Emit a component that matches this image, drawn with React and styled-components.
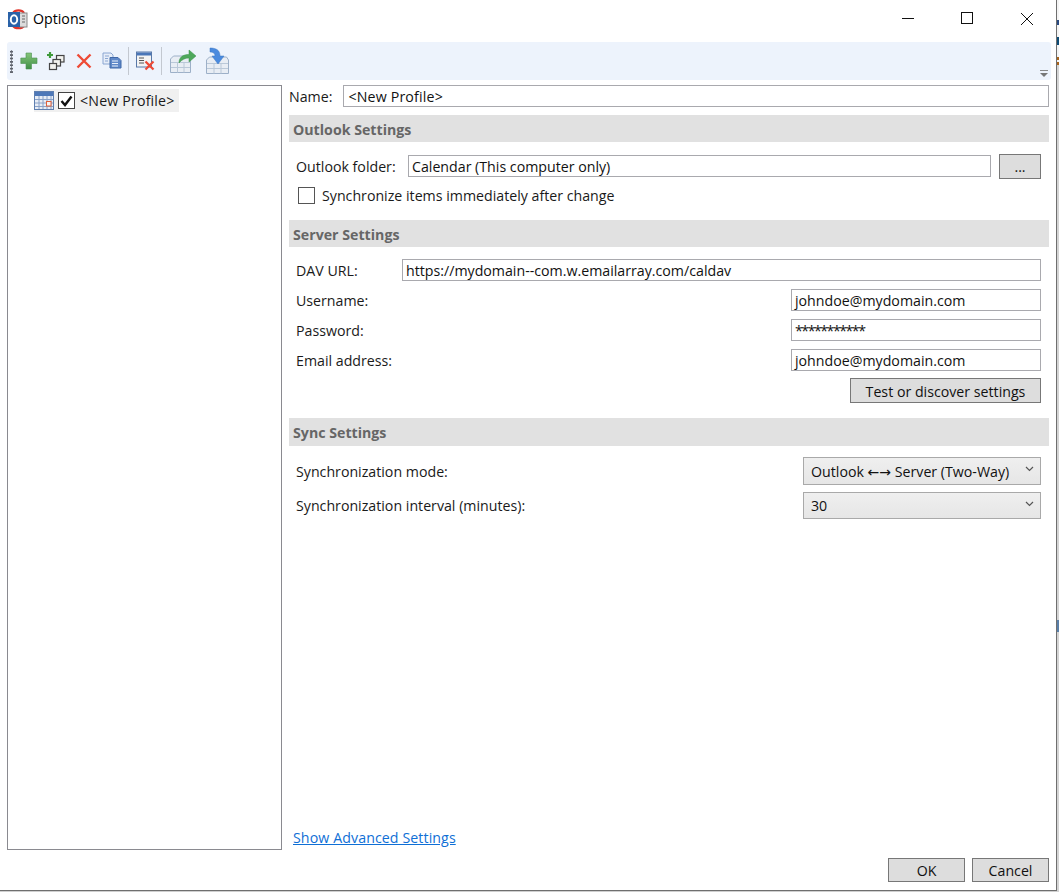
import React from 'react'
import styled, { createGlobalStyle } from 'styled-components'

const GlobalStyle = createGlobalStyle`
html, body {
  margin: 0;
  padding: 0;
  background: #ffffff;
}
body {
  font-family: "Open Sans", "Noto Sans", "Liberation Sans", sans-serif;
  font-size: 14.2px;
  color: #1a1a1a;
}
`

const Screen = styled.div`
width: 1059px;
height: 892px;
overflow: hidden;
display: flex;
background: #cfcfcf;
`

const Win = styled.div`
width: 1057px;
height: 891px;
flex: none;
box-sizing: border-box;
background: #ffffff;
border-right: 1px solid #6f6f6f;
border-bottom: 1px solid #6f6f6f;
display: flex;
flex-direction: column;
`

// what peeks out from the window behind the dialog
const BehindStrip = styled.div`
flex: 1;
background: linear-gradient(
  #f4f4f4 0 20px, #2a4a80 20px 25px, #f4f4f4 25px 37px, #0f4c75 37px 45px,
  #f4f4f4 45px 57px, #a8641c 57px 60px, #f4f4f4 60px 62px, #a8641c 62px 65px,
  #d4d4d4 65px 620px, #5a7fa8 620px 632px, #d4d4d4 632px
);
`

const TitleBar = styled.div`
height: 42px;
flex: none;
display: flex;
align-items: center;
padding: 0 0 5px 7px;
box-sizing: border-box;
`

const Title = styled.div`
margin-left: 4px;
font-size: 14.2px;
color: #000;
flex: 1;
`

const WinButton = styled.div`
width: 59px;
height: 37px;
display: flex;
align-items: center;
justify-content: center;
`

const Toolbar = styled.div`
height: 38px;
flex: none;
margin: 0 5px 0 7px;
background: #edf3fc;
border-radius: 3px;
display: flex;
align-items: center;
position: relative;
padding-left: 3px;
`

const Grip = styled.div`
width: 3px;
height: 23px;
margin-right: 2px;
background-image: radial-gradient(circle, #5f636c 1.2px, transparent 1.4px);
background-size: 3px 3.400px;
`

const ToolIcon = styled.div`
width: ${({ w }) => w || 28}px;
height: 28px;
display: flex;
align-items: center;
justify-content: center;
`

const ToolSep = styled.div`
width: 1px;
height: 28px;
margin: 0 3px 0 2px;
background: #c3c8d0;
`

const Overflow = styled.div`
position: absolute;
right: 2px;
bottom: 3px;
display: flex;
flex-direction: column;
align-items: center;
gap: 1px;
`

const Body = styled.div`
flex: 1;
display: flex;
padding: 5px 7px 0 7px;
min-height: 0;
`

const Tree = styled.div`
width: 275px;
height: 765px;
flex: none;
box-sizing: border-box;
border: 1px solid #8a8a90;
padding: 3px 0 0 26px;
`

const TreeNode = styled.div`
display: inline-flex;
align-items: center;
height: 23px;
background: #f0f0f0;
padding-right: 4px;
`

const TreeCheck = styled.div`
width: 17px;
height: 17px;
box-sizing: border-box;
margin: 0 5px 0 4px;
border: 1px solid #444;
background: #fff;
display: flex;
align-items: center;
justify-content: center;
`

const ProfileName = styled.span`
letter-spacing: 0.170px;
`

const Main = styled.div`
flex: 1;
margin-left: 7px;
display: flex;
flex-direction: column;
min-width: 0;
`

const NameRow = styled.div`
display: flex;
align-items: center;
height: 22px;
gap: 11px;
`

const Input = styled.div`
box-sizing: border-box;
height: 22px;
width: ${({ w }) => (w ? `${w}px` : 'auto')};
flex: ${({ w }) => (w ? 'none' : '1')};
min-width: 0;
border: 1px solid #a9a9ae;
background: #fff;
padding: 0 3px;
display: flex;
align-items: center;
color: #111;
white-space: nowrap;
`

const NameInput = styled(Input)`
padding-left: 4px;
`

const Secret = styled.span`
letter-spacing: -1.500px;
`

const SectionHead = styled.div`
height: ${({ h }) => h || 27}px;
margin-top: ${({ top }) => top}px;
box-sizing: border-box;
background: #e1e1e1;
color: #666;
font-weight: 700;
display: flex;
align-items: center;
padding: 1px 0 0 4px;
flex: none;
`

const Group = styled.div`
padding: 0 8px 0 7px;
display: flex;
flex-direction: column;
`

const Row = styled.div`
display: flex;
align-items: center;
justify-content: space-between;
height: ${({ h }) => h || 22}px;
margin-top: ${({ top }) => top || 0}px;
`

const FolderRow = styled(Row)`
justify-content: flex-start;
gap: 8px;
`

const Label = styled.span`
white-space: nowrap;
width: ${({ w }) => (w ? `${w}px` : 'auto')};
flex: none;
`

const FolderLabel = styled(Label)`
margin-right: -8px;
`

const Button = styled.div`
box-sizing: border-box;
width: ${({ w }) => w}px;
height: ${({ h }) => h || 25}px;
background: #dddddd;
border: 1px solid #777;
display: flex;
align-items: center;
justify-content: center;
padding-top: 1px;
flex: none;
color: #111;
`

const CheckRow = styled.div`
display: flex;
align-items: center;
height: 18px;
margin-top: 9px;
padding-left: 2px;
gap: 7px;
`

const CheckBox = styled.div`
width: 17px;
height: 17px;
box-sizing: border-box;
border: 1px solid #555;
background: #fff;
flex: none;
`

const Select = styled.div`
box-sizing: border-box;
width: 238px;
height: ${({ h }) => h}px;
border: 1px solid #a9a9a9;
background: linear-gradient(#efefef, #e6e6e6);
display: flex;
align-items: center;
justify-content: space-between;
padding: 0 6px 0 7px;
flex: none;
color: #111;
white-space: nowrap;
`

const Arrows = styled.span`
font-family: "DejaVu Sans", sans-serif;
font-size: 14px;
line-height: 1;
`

const ChevronWrap = styled.span`
display: flex;
margin-bottom: 4px;
`

const Footer = styled.div`
margin-top: auto;
padding-left: 4px;
height: 62px;
`

const LinkText = styled.a`
display: block;
line-height: 19px;
color: #0f6fd6;
text-decoration: underline;
letter-spacing: 0.090px;
cursor: pointer;
`

const Actions = styled.div`
display: flex;
justify-content: flex-end;
gap: 7px;
margin-top: 11px;
`

const AppIcon = () => <svg width='22' height='22' viewBox='0 0 22 22'>
  <path d='M6 5a6 4.500 0 0 1 11 0' fill='none' stroke='#e0352b' strokeWidth='2.200' />
  <path d='M6 18a6 3.500 0 0 0 11 0' fill='none' stroke='#e0352b' strokeWidth='2.200' />
  <rect x='12.500' y='5' width='7.500' height='14' fill='#dcdcdc' stroke='#8a8a8a' />
  <rect x='1' y='4' width='12' height='15' fill='#2a62a8' />
  <ellipse cx='7' cy='11.500' rx='3.200' ry='4.200' fill='none' stroke='#fff' strokeWidth='2' />
  <path d='M15 8h3M15 11h3M15 14h3' stroke='#666' strokeWidth='1.200' />
</svg>

const CloseGlyph = () => <svg width='14' height='14' viewBox='0 0 14 14'>
  <path d='M1 1l12 12M13 1L1 13' stroke='#111' strokeWidth='1' fill='none' />
</svg>

const MaxGlyph = () => <svg width='13' height='13' viewBox='0 0 13 13'>
  <rect x='.5' y='.5' width='11' height='11' stroke='#111' fill='none' />
</svg>

const MinGlyph = () => <svg width='13' height='13' viewBox='0 0 13 13'>
  <path d='M0 6.500h12' stroke='#111' fill='none' />
</svg>

const PlusIcon = () => <svg width='18' height='18' viewBox='0 0 18 18'>
  <defs>
    <linearGradient id='plusFill' x1='0' y1='0' x2='0' y2='1'>
      <stop offset='0' stopColor='#86c57a' />
      <stop offset='1' stopColor='#3f8f45' />
    </linearGradient>
  </defs>
  <path d='M6 1h5.500v5h5.500v5.500h-5.500V17H6v-5.500H.8V6H6z' fill='url(#plusFill)' stroke='#4b9150' strokeWidth='.6' />
</svg>

const CopyAddIcon = () => <svg width='20' height='20' viewBox='0 0 20 20'>
  <path d='M4 1v6M1 4h6' stroke='#3f9a3a' strokeWidth='2.200' />
  <rect x='10.500' y='4.500' width='7.500' height='6.500' fill='#f2f2ee' stroke='#444' strokeWidth='1.200' />
  <rect x='7' y='8.500' width='7.500' height='6.500' fill='#f2f2ee' stroke='#444' strokeWidth='1.200' />
  <rect x='3.500' y='12.500' width='7' height='6' fill='#f2f2ee' stroke='#444' strokeWidth='1.200' />
</svg>

const DeleteIcon = () => <svg width='18' height='18' viewBox='0 0 18 18'>
  <path d='M2.500 2.500l13 13M15.500 2.500l-13 13' stroke='#ee4a36' strokeWidth='2.400' />
</svg>

const DocsIcon = () => <svg width='20' height='18' viewBox='0 0 20 18'>
  <path d='M1 1h8l2 2v9H1z' fill='#e6edf8' stroke='#8aa6d2' />
  <path d='M8 5.500h8l3 3v7.500H8z' fill='#5f88c8' stroke='#3f68a8' />
  <path d='M10 9h6M10 11.500h6M10 14h6' stroke='#e8f0fa' />
  <path d='M3 4h4M3 6.500h3M3 9h3' stroke='#8aa6d2' />
</svg>

const ClearIcon = () => <svg width='22' height='22' viewBox='0 0 22 22'>
  <rect x='1.500' y='2' width='15' height='15' fill='#f3f3f3' stroke='#5878a8' />
  <rect x='2' y='2.500' width='14' height='3' fill='#4a76b8' />
  <path d='M4 8h5M4 10.500h5M4 13h5' stroke='#555' />
  <path d='M10.500 11.500l8 8M18.500 11.500l-8 8' stroke='#ee4a36' strokeWidth='2.200' />
</svg>

const ExportIcon = () => <svg width='28' height='26' viewBox='0 0 28 26'>
  <path d='M1.500 11l3-3h17v16.500h-20z' fill='#e8edf4' stroke='#9db0c8' />
  <path d='M2 14.500h19M2 19.500h19M8.500 14.500v10M15 14.500v10' stroke='#bac8d8' />
  <path d='M10 15c0-6 4-8.500 10-8.500V2l7 6-7 6v-4c-4 0-7 1.500-10 5z' fill='#4ea85c' stroke='#3a9249' strokeWidth='.5' />
</svg>

const ImportIcon = () => <svg width='26' height='28' viewBox='0 0 26 28'>
  <path d='M1.500 13l3-3h17l2 3v13.500h-22z' fill='#e8edf4' stroke='#9db0c8' />
  <path d='M2 16.500h21M2 21.500h21M9 16.500v10M16 16.500v10' stroke='#bac8d8' />
  <path d='M5 1c6 0 10 2 10 8h4l-6 8-6-8h3c0-3-2-4-5-4z' fill='#4a8ade' stroke='#3a74c0' strokeWidth='.5' />
</svg>

const CalendarIcon = () => <svg width='20' height='19' viewBox='0 0 20 19'>
  <rect x='.5' y='.5' width='19' height='18' fill='#e8edf5' stroke='#5f7fb0' />
  <rect x='1' y='1' width='18' height='4' fill='#4e78b8' />
  <path d='M1 8.500h18M1 12h18M1 15.500h18M5 5v13M9 5v13M13 5v13M17 5v13' stroke='#8aa2c8' />
  <rect x='12.500' y='10.500' width='4.500' height='4.500' fill='#f4f4f4' stroke='#e0603a' />
</svg>

const Chevron = () => <ChevronWrap>
  <svg width='9' height='6' viewBox='0 0 9 6'>
    <path d='M1 1l3.500 3.500L8 1' stroke='#555' strokeWidth='1.200' fill='none' />
  </svg>
</ChevronWrap>

const TickMark = () => <svg width='13' height='12' viewBox='0 0 13 12'>
  <path d='M1.500 6l3.500 4 6.500-8.500' stroke='#111' strokeWidth='2.400' fill='none' />
</svg>

export default function App () {
  return <Screen>
    <GlobalStyle />
    <Win>
      <TitleBar>
        <AppIcon />
        <Title>Options</Title>
        <WinButton><MinGlyph /></WinButton>
        <WinButton><MaxGlyph /></WinButton>
        <WinButton><CloseGlyph /></WinButton>
      </TitleBar>
      <Toolbar>
        <Grip />
        <ToolIcon w={27}><PlusIcon /></ToolIcon>
        <ToolIcon w={28}><CopyAddIcon /></ToolIcon>
        <ToolIcon w={27}><DeleteIcon /></ToolIcon>
        <ToolIcon w={29}><DocsIcon /></ToolIcon>
        <ToolSep />
        <ToolIcon w={27}><ClearIcon /></ToolIcon>
        <ToolSep />
        <ToolIcon w={35}><ExportIcon /></ToolIcon>
        <ToolIcon w={35}><ImportIcon /></ToolIcon>
        <Overflow>
          <svg width='10' height='7' viewBox='0 0 10 7'>
            <path d='M1 .5h8' stroke='#888' />
            <path d='M1 3h8L5 7z' fill='#777' />
          </svg>
        </Overflow>
      </Toolbar>
      <Body>
        <Tree>
          <TreeNode>
            <CalendarIcon />
            <TreeCheck><TickMark /></TreeCheck>
            <ProfileName>&lt;New Profile&gt;</ProfileName>
          </TreeNode>
        </Tree>
        <Main>
          <NameRow>
            <Label>Name:</Label>
            <NameInput><ProfileName>&lt;New Profile&gt;</ProfileName></NameInput>
          </NameRow>
          <SectionHead top={8}>Outlook Settings</SectionHead>
          <Group>
            <FolderRow top={13}>
              <FolderLabel w={112}>Outlook folder:</FolderLabel>
              <Input>Calendar (This computer only)</Input>
              <Button w={42} h={25}>...</Button>
            </FolderRow>
            <CheckRow>
              <CheckBox />
              Synchronize items immediately after change
            </CheckRow>
          </Group>
          <SectionHead top={16}>Server Settings</SectionHead>
          <Group>
            <Row top={12}>
              <Label w={106}>DAV URL:</Label>
              <Input>https://mydomain--com.w.emailarray.com/caldav</Input>
            </Row>
            <Row top={8}>
              <Label>Username:</Label>
              <Input w={250}>johndoe@mydomain.com</Input>
            </Row>
            <Row top={8}>
              <Label>Password:</Label>
              <Input w={250}><Secret>***********</Secret></Input>
            </Row>
            <Row top={8}>
              <Label>Email address:</Label>
              <Input w={250}>johndoe@mydomain.com</Input>
            </Row>
            <Row top={7} h={25}>
              <span />
              <Button w={191} h={25}>Test or discover settings</Button>
            </Row>
          </Group>
          <SectionHead top={15} h={28}>Sync Settings</SectionHead>
          <Group>
            <Row top={11} h={28}>
              <Label>Synchronization mode:</Label>
              <Select h={28}><span>Outlook <Arrows>←→</Arrows> Server (Two-Way)</span><Chevron /></Select>
            </Row>
            <Row top={7} h={27}>
              <Label>Synchronization interval (minutes):</Label>
              <Select h={27}>30<Chevron /></Select>
            </Row>
          </Group>
          <Footer>
            <LinkText>Show Advanced Settings</LinkText>
            <Actions>
              <Button w={77} h={24}>OK</Button>
              <Button w={77} h={24}>Cancel</Button>
            </Actions>
          </Footer>
        </Main>
      </Body>
    </Win>
    <BehindStrip />
  </Screen>
}
